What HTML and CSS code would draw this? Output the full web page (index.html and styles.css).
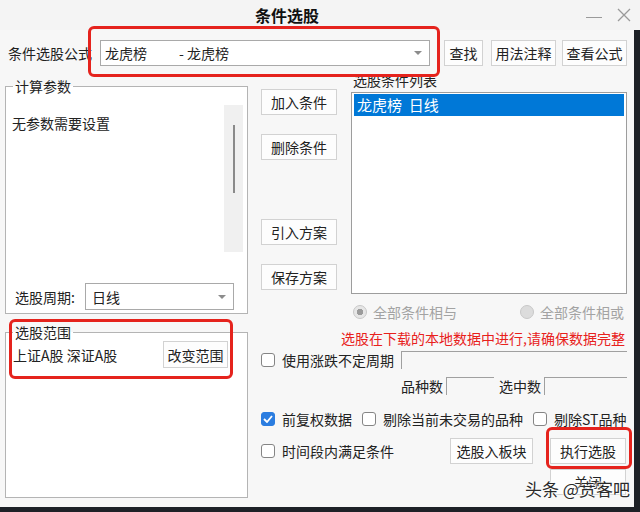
FILE: index.html
```html
<!DOCTYPE html>
<html lang="zh-CN">

<head>
  <meta charset="UTF-8">
  <meta name="viewport" content="width=device-width, initial-scale=1.0">
  <title>条件选股</title>
  <link rel="stylesheet" href="styles.css">
</head>

<body>
  <div class="window">
    <div class="titlebar">
      <span class="title">条件选股</span>
      <span class="win-btns">
        <span class="min"></span>
        <svg class="close" width="14" height="14" viewBox="0 0 14 14">
          <path d="M1 1 L13 13 M13 1 L1 13" stroke="#9a9a9a" stroke-width="1.3" fill="none" />
        </svg>
      </span>
    </div>

    <div class="formula-row">
      <span class="formula-label">条件选股公式</span>
      <div class="combo formula-combo">
        <span class="name">龙虎榜</span>
        <span>- 龙虎榜</span>
        <i class="arrow"></i>
      </div>
      <button class="btn btn-find">查找</button>
      <button class="btn btn-doc">用法注释</button>
      <button class="btn btn-view">查看公式</button>
    </div>

    <div class="main">
      <div class="left">
        <fieldset class="group params">
          <legend>计算参数</legend>
          <div class="param-area">
            <div class="param-text">无参数需要设置</div>
            <div class="vscroll"><i></i></div>
          </div>
          <div class="period-row">
            <span class="period-label">选股周期:</span>
            <div class="combo period-combo">日线<i class="arrow"></i></div>
          </div>
        </fieldset>

        <fieldset class="group range">
          <legend>选股范围</legend>
          <div class="range-body">
            <div class="range-row">
              <span>上证A股 深证A股</span>
              <button class="btn btn-range">改变范围</button>
            </div>
          </div>
        </fieldset>
      </div>

      <div class="right">
        <div class="right-top">
          <div class="actions">
            <button class="btn btn-side">加入条件</button>
            <button class="btn btn-side gap-s">删除条件</button>
            <button class="btn btn-side gap-l">引入方案</button>
            <button class="btn btn-side gap-s">保存方案</button>
          </div>
          <div class="cond-list">
            <div class="list-label">选股条件列表</div>
            <div class="listbox">
              <div class="list-item selected">龙虎榜&nbsp;&nbsp;日线</div>
            </div>
          </div>
        </div>

        <div class="radios">
          <span class="radio-item"><i class="radio on"></i>全部条件相与</span>
          <span class="radio-item"><i class="radio"></i>全部条件相或</span>
        </div>

        <p class="warn">选股在下载的本地数据中进行,请确保数据完整</p>

        <div class="row row-period">
          <span class="check-item"><i class="cb"></i>使用涨跌不定周期</span>
          <span class="field field-grow"></span>
        </div>

        <div class="row row-count">
          <span>品种数</span>
          <span class="field field-total"></span>
          <span class="count-label">选中数</span>
          <span class="field field-picked"></span>
        </div>

        <div class="row row-opts">
          <span class="check-item">
            <i class="cb checked"><svg width="10" height="8" viewBox="0 0 10 8"><path d="M1 4 L4 7 L9 1" stroke="#fff" stroke-width="1.8" fill="none" /></svg></i>前复权数据
          </span>
          <span class="check-item"><i class="cb"></i>剔除当前未交易的品种</span>
          <span class="check-item"><i class="cb"></i>剔除ST品种</span>
        </div>

        <div class="row row-run">
          <span class="check-item"><i class="cb"></i>时间段内满足条件</span>
          <button class="btn btn-block">选股入板块</button>
          <button class="btn btn-run">执行选股</button>
        </div>

        <div class="row row-close">
          <button class="btn btn-close">关闭</button>
        </div>
      </div>
    </div>

    <!-- red annotation boxes from the screenshot -->
    <div class="mark mark-formula"></div>
    <div class="mark mark-range"></div>
    <div class="mark mark-run"></div>

    <div class="watermark">头条 @贲客吧</div>
  </div>
</body>

</html>
```

FILE: styles.css
```css
* {
  box-sizing: border-box;
}

body {
  margin: 0;
  width: 640px;
  height: 512px;
  overflow: hidden;
  background-color: #1e2127;
  font-family: "Noto Sans CJK SC", sans-serif;
  font-size: 14px;
  color: #222;
}

.window {
  position: relative;
  width: 634px;
  height: 507px;
  background-color: #f7f7f7;
}

.titlebar {
  display: flex;
  align-items: center;
  height: 30px;
  width: 640px;
  background-color: #f4f4f4;
}

.title {
  margin-left: 255px;
  font-size: 16px;
  font-weight: bold;
  line-height: 20px;
  color: #111;
}

.win-btns {
  display: flex;
  align-items: center;
  margin-left: auto;
  margin-right: 9px;
}

.min {
  width: 16px;
  height: 1px;
  margin-top: 4px;
  margin-right: 15px;
  background-color: #9a9a9a;
}

.close {
  display: block;
}

.btn {
  height: 26px;
  padding: 0;
  border: 1px solid #d2d2d2;
  background-color: #fdfdfd;
  font-family: inherit;
  font-size: 14px;
  line-height: 22px;
  color: #222;
}

.combo {
  position: relative;
  display: flex;
  align-items: center;
  background-color: #fff;
  border: 1px solid #a9a9a9;
  line-height: 18px;
}

.arrow {
  position: absolute;
  top: 50%;
  right: 7px;
  margin-top: -2px;
  border-left: 4px solid transparent;
  border-right: 4px solid transparent;
  border-top: 4px solid #8c8c8c;
}

.formula-row {
  display: flex;
  align-items: center;
  margin-top: 10px;
  padding-left: 8px;
  height: 26px;
}

.formula-label {
  width: 92px;
}

.formula-combo {
  width: 330px;
  height: 26px;
  padding-left: 4px;
}

.formula-combo .name {
  width: 74px;
}

.btn-find {
  width: 39px;
  margin-left: 14px;
}

.btn-doc {
  width: 65px;
  margin-left: 8px;
}

.btn-view {
  width: 65px;
  margin-left: 6px;
}

.main {
  display: flex;
  margin-top: 6px;
  padding-left: 5px;
}

.left {
  width: 243px;
}

.group {
  margin: 0;
  padding: 0;
  border: 1px solid #b4b4b4;
  background-color: #fff;
}

.group legend {
  margin-left: 7px;
  padding: 0 2px;
  line-height: 16px;
  color: #222;
}

.params {
  margin-top: 6px;
  padding-bottom: 3px;
}

.param-area {
  display: flex;
  height: 147px;
  margin: 11px 4px 0 0;
}

.param-text {
  flex: 1;
  padding: 10px 0 0 6px;
  line-height: 16px;
}

.vscroll {
  width: 19px;
  padding: 20px 0 0 9px;
  background-color: #f0f0f0;
}

.vscroll i {
  display: block;
  width: 2px;
  height: 68px;
  background-color: #8a8a8a;
}

.period-row {
  display: flex;
  align-items: center;
  margin-top: 31px;
  padding-left: 9px;
}

.period-label {
  width: 70px;
}

.period-combo {
  width: 149px;
  height: 27px;
  padding-left: 6px;
}

.range {
  margin-top: 10px;
}

.range-body {
  height: 156px;
}

.range-row {
  display: flex;
  align-items: center;
  margin-top: 1px;
  padding-left: 7px;
}

.btn-range {
  width: 65px;
  height: 27px;
  margin-left: auto;
  margin-right: 19px;
}

.right {
  width: 366px;
  margin-left: 13px;
}

.right-top {
  display: flex;
  height: 222px;
}

.actions {
  display: flex;
  flex-direction: column;
  width: 76px;
  padding-top: 17px;
}

.btn-side {
  width: 76px;
}

.gap-s {
  margin-top: 19px;
}

.gap-l {
  margin-top: 59px;
}

.cond-list {
  width: 276px;
  margin-left: 14px;
}

.list-label {
  padding-left: 2px;
  line-height: 16px;
}

.listbox {
  height: 202px;
  margin-top: 4px;
  padding: 1px 2px;
  border: 1px solid #9d9d9d;
  background-color: #fff;
}

.list-item {
  height: 22px;
  padding-left: 3px;
  font-size: 15px;
  line-height: 22px;
}

.list-item.selected {
  background-color: #0078d7;
  color: #fff;
}

.radios {
  display: flex;
  justify-content: space-between;
  margin-top: 10px;
  padding: 0 3px 0 92px;
  line-height: 16px;
  color: #a3a3a3;
}

.radio-item {
  display: flex;
  align-items: center;
}

.radio {
  width: 14px;
  height: 14px;
  margin-right: 6px;
  border-radius: 50%;
  border: 1px solid #c8c8c8;
  background-color: #dcdcdc;
}

.radio.on {
  background-color: #e6e6e6;
  background-image: radial-gradient(circle, #9b9b9b 0 3px, transparent 3.5px);
}

.warn {
  margin: 9px 0 0;
  padding-right: 2px;
  text-align: right;
  line-height: 18px;
  color: #e8211c;
}

.row {
  display: flex;
  align-items: center;
}

.check-item {
  display: flex;
  align-items: center;
  line-height: 18px;
}

.cb {
  display: flex;
  align-items: center;
  justify-content: center;
  width: 14px;
  height: 14px;
  margin-right: 7px;
  border: 1px solid #858585;
  border-radius: 3px;
  background-color: #fff;
}

.cb.checked {
  border-color: #2b7de0;
  background-color: #2b7de0;
}

.field {
  height: 18px;
  border-top: 1px solid #a0a0a0;
  border-left: 1px solid #a0a0a0;
}

.row-period {
  margin-top: 4px;
  height: 18px;
}

.field-grow {
  flex: 1;
  margin-left: 7px;
}

.row-count {
  justify-content: flex-end;
  margin-top: 8px;
  height: 18px;
  line-height: 18px;
}

.field-total {
  width: 48px;
  margin-left: 3px;
}

.count-label {
  margin-left: 5px;
}

.field-picked {
  width: 83px;
  margin-left: 3px;
}

.row-opts {
  margin-top: 15px;
  height: 18px;
}

.row-opts .check-item + .check-item {
  margin-left: 10px;
}

.row-run {
  margin-top: 10px;
}

.btn-block {
  width: 83px;
  margin-left: auto;
}

.btn-run {
  width: 76px;
  margin-left: 17px;
  margin-right: 1px;
}

.row-close {
  justify-content: flex-end;
  margin-top: 5px;
}

.btn-close {
  width: 76px;
  margin-right: 1px;
}

.mark {
  position: absolute;
  border: 3px solid #e5231d;
  border-radius: 6px;
}

.mark-formula {
  left: 88px;
  top: 26px;
  width: 352px;
  height: 51px;
}

.mark-range {
  left: 9px;
  top: 319px;
  width: 224px;
  height: 60px;
}

.mark-run {
  left: 546px;
  top: 427px;
  width: 86px;
  height: 42px;
}

.watermark {
  position: absolute;
  left: 525px;
  top: 479px;
  font-size: 17px;
  line-height: 20px;
  color: #2a2a2a;
  text-shadow: 0 0 2px #fff, 0 0 2px #fff, 0 0 3px #fff;
}
```
